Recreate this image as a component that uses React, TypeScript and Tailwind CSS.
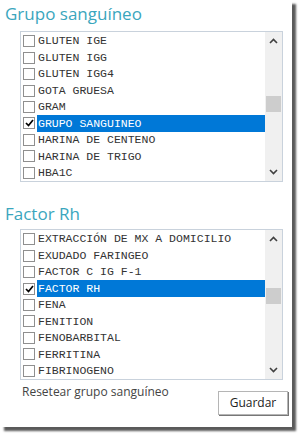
import React from "react";

type Item = { label: string; checked?: boolean };

const grupo: Item[] = [
  { label: "GLUTEN IGE" },
  { label: "GLUTEN IGG" },
  { label: "GLUTEN IGG4" },
  { label: "GOTA GRUESA" },
  { label: "GRAM" },
  { label: "GRUPO SANGUINEO", checked: true },
  { label: "HARINA DE CENTENO" },
  { label: "HARINA DE TRIGO" },
  { label: "HBA1C" },
];

const factor: Item[] = [
  { label: "EXTRACCIÓN DE MX A DOMICILIO" },
  { label: "EXUDADO FARINGEO" },
  { label: "FACTOR C IG F-1" },
  { label: "FACTOR RH", checked: true },
  { label: "FENA" },
  { label: "FENITION" },
  { label: "FENOBARBITAL" },
  { label: "FERRITINA" },
  { label: "FIBRINOGENO" },
];

function Chevron({ up }: { up?: boolean }) {
  return (
    <svg width="9" height="6" viewBox="0 0 9 6" className="block">
      <path
        d={up ? "M1 5 L4.5 1.5 L8 5" : "M1 1 L4.5 4.5 L8 1"}
        fill="none"
        stroke="#404040"
        strokeWidth="1.6"
      />
    </svg>
  );
}

function CheckList({ items, thumbTop }: { items: Item[]; thumbTop: number }) {
  return (
    <div className="ml-[20px] flex h-[151px] w-[263px] border border-[#c9d2dc] bg-white">
      <div className="flex flex-1 flex-col pt-[1px]">
        {items.map((it) => (
          <div key={it.label} className="flex h-[16.5px] items-center pl-[2px]">
            <span className="flex h-[12px] w-[12px] shrink-0 items-center justify-center border border-[#8f8f8f] bg-white">
              {it.checked && (
                <svg width="9" height="8" viewBox="0 0 9 8">
                  <path d="M1 4 L3.5 6.5 L8 1" fill="none" stroke="#000" strokeWidth="1.7" />
                </svg>
              )}
            </span>
            <span
              className={`ml-[2px] flex h-full flex-1 items-center whitespace-nowrap pl-[1px] font-['Liberation_Mono',monospace] text-[11.5px] leading-none ${
                it.checked ? "bg-[#0078d7] text-white" : "text-[#333]"
              }`}
            >
              {it.label}
            </span>
          </div>
        ))}
      </div>
      <div className="relative flex w-[17px] flex-col items-center justify-between bg-[#f0f0f0] py-[6px]">
        <Chevron up />
        <Chevron />
        <div
          className="absolute left-[1px] h-[16px] w-[15px] bg-[#cdcdcd]"
          style={{ top: thumbTop }}
        />
      </div>
    </div>
  );
}

export default function App() {
  return (
    <div className="h-[436px] w-[300px] bg-white">
      <div className="flex h-[427px] w-[292px] flex-col bg-white shadow-[4px_4px_2px_#5a5a5a] font-['Open_Sans',sans-serif]">
        <h2 className="pl-[5px] pt-[1px] text-[17px] font-normal leading-[26px] text-[#3aa6bd]">
          Grupo sanguíneo
        </h2>
        <div className="mt-[4px]">
          <CheckList items={grupo} thumbTop={64} />
        </div>
        <h2 className="mt-[19px] pl-[5px] text-[17px] font-normal leading-[26px] text-[#3aa6bd]">
          Factor Rh
        </h2>
        <div className="mt-[2px]">
          <CheckList items={factor} thumbTop={58} />
        </div>
        <div className="flex items-start justify-between pl-[22px] pr-[4px] pt-[3px]">
          <span className="text-[12px] text-[#444]">Resetear grupo sanguíneo</span>
          <button className="mt-[8px] h-[24px] w-[70px] border border-[#b5b5b5] bg-white text-[12px] text-[#222] shadow-[1px_1px_0_#777]">
            Guardar
          </button>
        </div>
      </div>
    </div>
  );
}
